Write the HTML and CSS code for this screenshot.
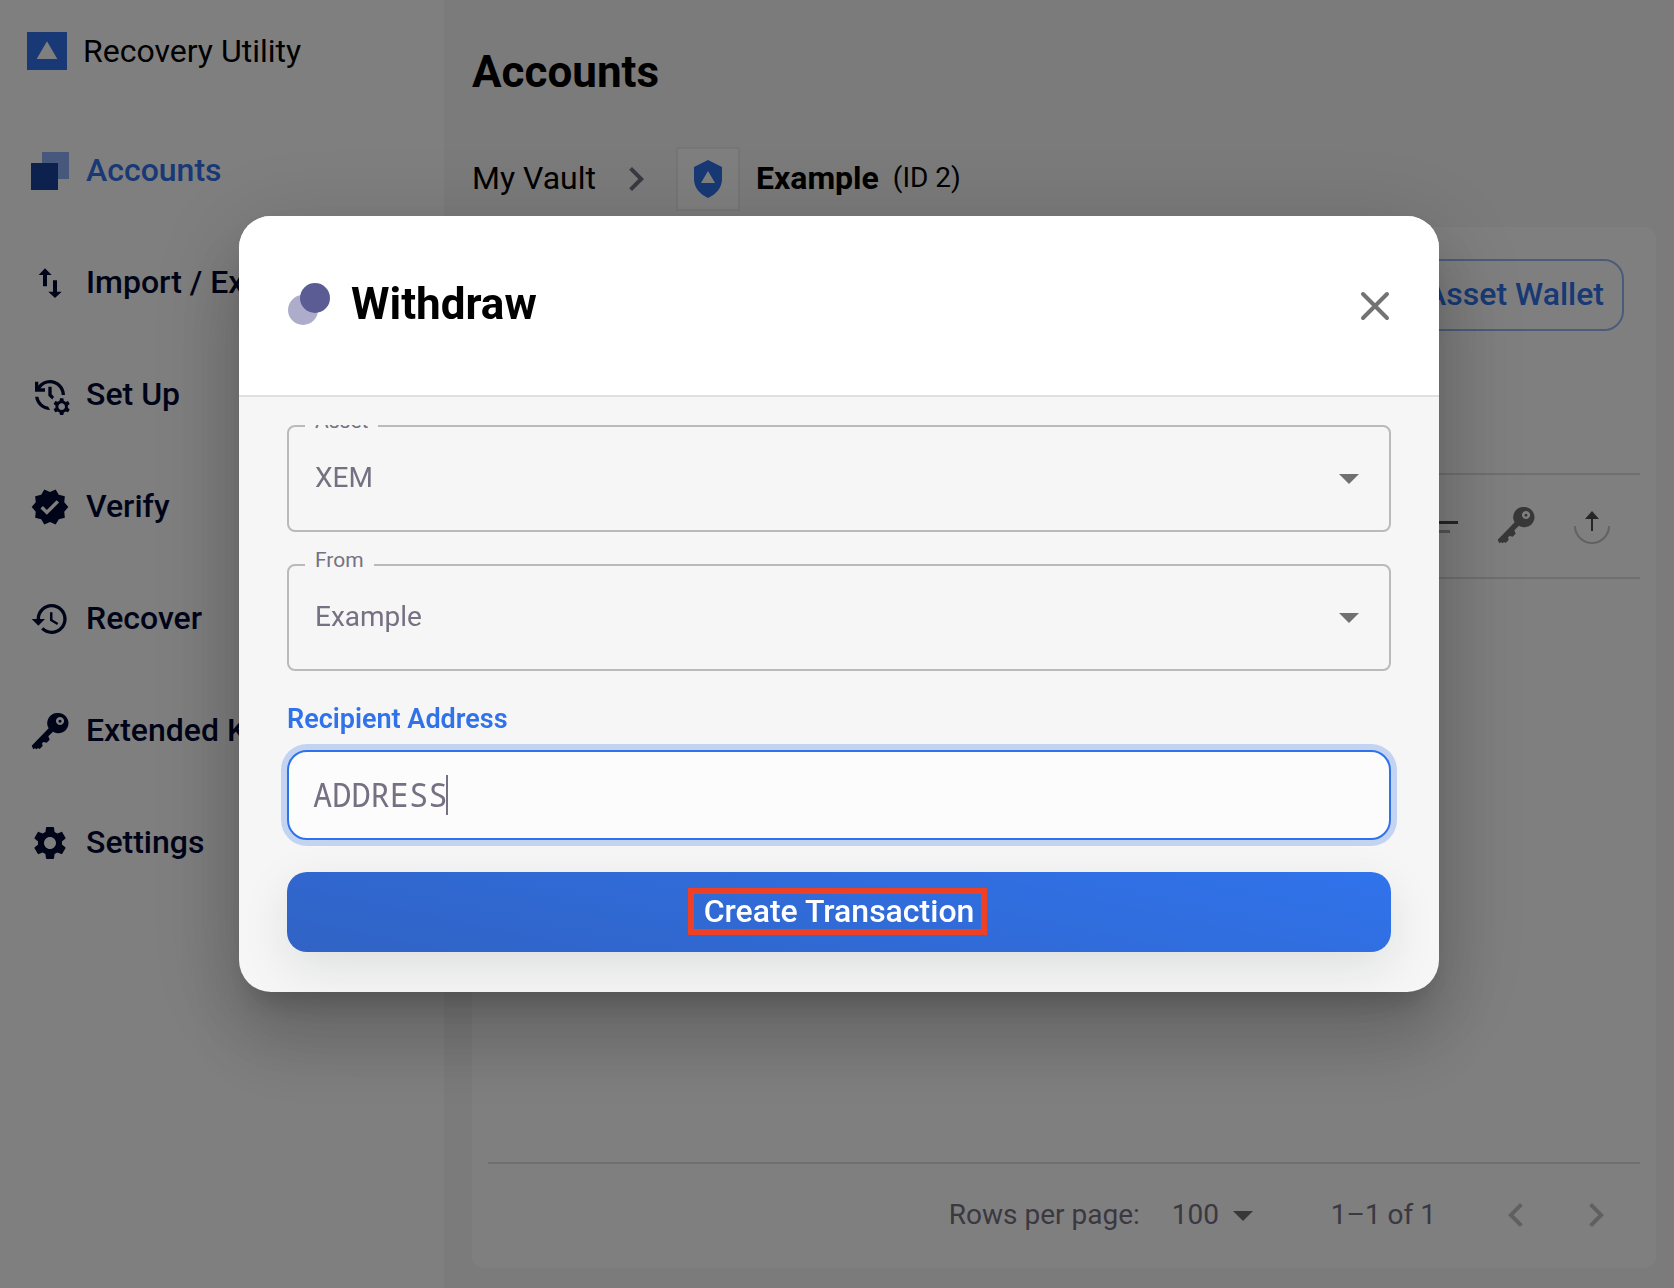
FILE: index.html
```html
<!DOCTYPE html>
<html lang="en">
<head>
<meta charset="utf-8">
<title>Recovery Utility</title>
<link rel="stylesheet" href="styles.css">
</head>
<body>
<svg class="defs" width="0" height="0" aria-hidden="true">
  <symbol id="key" viewBox="0 0 120 120">
    <path fill-rule="evenodd" d="M84.500 6a30.500 30.500 0 1 1-15.500 56.500L55 76l4 10-9 9-9-2-5 4 2 8-9 9-5-3-4 4-5-3-5 3L5 104 56 52A30.500 30.500 0 0 1 84.500 6ZM90 18a12 12 0 1 0 .1 0ZM90 26a4.500 4.500 0 1 1-.1 0Z"/>
  </symbol>
  <symbol id="drop" viewBox="0 0 24 24"><path d="M7 10l5 5 5-5z"/></symbol>
  <symbol id="next" viewBox="0 0 24 24"><path d="M10 6L8.590 7.410 13.170 12l-4.580 4.590L10 18l6-6z"/></symbol>
  <symbol id="prev" viewBox="0 0 24 24"><path d="M15.410 7.410L14 6l-6 6 6 6 1.410-1.410L10.830 12z"/></symbol>
</svg>

<div class="app">
  <aside class="sidebar">
    <div class="brand">
      <svg class="logo" viewBox="0 0 120 114"><path fill="#3072ea" d="M0 0h120v114H0z"/><path fill="#fff" d="M29 81h62L60 28z"/></svg>
      <span>Recovery Utility</span>
    </div>
    <nav class="nav">
      <a class="nav-item active" href="#accounts">
        <svg viewBox="0 0 120 120"><path fill="#90b0fb" d="M36 3h81v81H36z"/><path fill="#1a429c" d="M3 36h81v81H3z"/></svg>
        <span>Accounts</span>
      </a>
      <a class="nav-item" href="#import">
        <svg viewBox="0 0 120 120"><path d="M26 36 45 16l20 20H51v34H39V36zM69 52h12v34h14L75 105 55 86h14z"/></svg>
        <span>Import / Export</span>
      </a>
      <a class="nav-item" href="#setup">
        <svg viewBox="0 0 24 24"><path d="M22.690 18.370l1.140-1-1-1.730-1.450.49c-.32-.27-.68-.48-1.080-.63L20 14h-2l-.3 1.490c-.4.15-.76.36-1.080.63l-1.450-.49-1 1.730 1.140 1c-.08.5-.08.76 0 1.260l-1.140 1 1 1.730 1.450-.49c.32.27.68.48 1.080.63L18 24h2l.3-1.490c.4-.15.76-.36 1.080-.63l1.450.49 1-1.730-1.140-1c.08-.51.08-.77 0-1.270zM19 21c-1.100 0-2-.9-2-2s.9-2 2-2 2 .9 2 2-.9 2-2 2zM11 7v5.410l2.360 2.360 1.040-1.790-1.400-1.390V7h-2zm10 5c0-4.970-4.030-9-9-9-2.830 0-5.350 1.320-7 3.360V4H3v6h6V8H6.260C7.530 6.190 9.630 5 12 5c3.860 0 7 3.140 7 7h2zm-10.140 6.910c-2.990-.49-5.350-2.900-5.780-5.910H3.060c.5 4.500 4.310 8 8.940 8h.07l-1.210-2.090z"/></svg>
        <span>Set Up</span>
      </a>
      <a class="nav-item" href="#verify">
        <svg viewBox="0 0 24 24"><path d="M23 12l-2.440-2.790.34-3.690-3.610-.82-1.890-3.200L12 2.960 8.600 1.500 6.710 4.690 3.100 5.500l.34 3.700L1 12l2.440 2.790-.34 3.700 3.610.82L8.600 22.500l3.400-1.470 3.400 1.460 1.890-3.190 3.610-.82-.34-3.690L23 12zm-12.910 4.720l-3.800-3.810 1.480-1.480 2.320 2.330 5.850-5.870 1.480 1.480-7.330 7.350z"/></svg>
        <span>Verify</span>
      </a>
      <a class="nav-item" href="#recover">
        <svg viewBox="0 0 24 24"><path d="M13 3c-4.970 0-9 4.030-9 9H1l3.890 3.890.07.14L9 12H6c0-3.870 3.130-7 7-7s7 3.130 7 7-3.130 7-7 7c-1.930 0-3.680-.79-4.940-2.060l-1.420 1.420C8.270 19.990 10.510 21 13 21c4.970 0 9-4.030 9-9s-4.030-9-9-9zm-1 5v5l4.280 2.540.72-1.210-3.500-2.080V8H12z"/></svg>
        <span>Recover</span>
      </a>
      <a class="nav-item" href="#keys">
        <svg><use href="#key"/></svg>
        <span>Extended Keys</span>
      </a>
      <a class="nav-item" href="#settings">
        <svg viewBox="0 0 24 24"><path d="M19.140 12.940c.04-.3.06-.61.06-.94 0-.32-.02-.64-.07-.94l2.030-1.580c.18-.14.23-.41.12-.61l-1.920-3.320c-.12-.22-.37-.29-.59-.22l-2.390.96c-.5-.38-1.030-.7-1.620-.94l-.36-2.540c-.04-.24-.24-.41-.48-.41h-3.840c-.24 0-.43.17-.47.41l-.36 2.540c-.59.24-1.130.57-1.620.94l-2.390-.96c-.22-.08-.47 0-.59.22L2.740 8.870c-.12.21-.08.47.12.61l2.030 1.580c-.05.3-.09.63-.09.94s.02.64.07.94l-2.030 1.580c-.18.14-.23.41-.12.61l1.920 3.320c.12.22.37.29.59.22l2.390-.96c.5.38 1.030.7 1.620.94l.36 2.540c.05.24.24.41.48.41h3.840c.24 0 .44-.17.47-.41l.36-2.540c.59-.24 1.130-.56 1.620-.94l2.390.96c.22.08.47 0 .59-.22l1.920-3.320c.12-.22.07-.47-.12-.61l-2.010-1.580zM12 15.600c-1.980 0-3.600-1.620-3.600-3.600s1.620-3.600 3.600-3.600 3.600 1.620 3.600 3.600-1.620 3.600-3.600 3.600z"/></svg>
        <span>Settings</span>
      </a>
    </nav>
  </aside>

  <main class="main">
    <h1 class="title">Accounts</h1>
    <div class="crumbs">
      <a href="#vault">My Vault</a>
      <svg class="icon-lg crumb-sep"><use href="#next"/></svg>
      <span class="vault-badge">
        <svg viewBox="0 0 28 38"><path fill="#3072ea" d="M14 0l14 7v12c0 8-5 15-14 19C5 34 0 27 0 19V7z"/><path fill="#fff" d="M7 23h14L14 11z"/></svg>
      </span>
      <div class="vault-name">
        <strong>Example</strong>
        <span class="vault-id">(ID 2)</span>
      </div>
    </div>

    <section class="card">
      <div class="toolbar"><button class="add-wallet" type="button">Add Asset Wallet</button></div>
      <table class="wallets">
        <tbody>
          <tr>
            <td>XEM</td>
            <td>
              <div class="actions">
                <button type="button" aria-label="Details"><svg viewBox="0 0 40 40"><path fill="#4a4a54" d="M2 16h36v3H2z"/><path fill="#a8a8ae" d="M10 25h20v3H10z"/></svg></button>
                <button type="button" aria-label="Keys"><svg><use href="#key"/></svg></button>
                <button type="button" aria-label="Withdraw"><svg viewBox="0 0 40 40"><path fill="none" stroke="#c4c4c4" stroke-width="2" d="M3 21a17 17 0 0 0 34 0"/><path fill="#4c4c52" d="M13 14l7-8 7 8h-6v12h-2V14z"/></svg></button>
              </div>
            </td>
          </tr>
        </tbody>
      </table>
      <footer class="pager">
        <label for="rows">Rows per page:</label>
        <span class="rows">
          <select id="rows"><option>100</option></select>
          <svg class="icon-lg drop"><use href="#drop"/></svg>
        </span>
        <span class="range">1–1 of 1</span>
        <button type="button" aria-label="Previous page" disabled><svg class="icon-lg"><use href="#prev"/></svg></button>
        <button type="button" aria-label="Next page" disabled><svg class="icon-lg"><use href="#next"/></svg></button>
      </footer>
    </section>
  </main>
</div>

<div class="backdrop">
  <div class="dialog" role="dialog" aria-modal="true" aria-labelledby="dialog-title">
    <header class="dialog-head">
      <svg class="coin" viewBox="0 0 44 44"><circle cx="16" cy="28" r="15" fill="#adadcb"/><circle cx="28" cy="16" r="15" fill="#5b5c94"/></svg>
      <h2 id="dialog-title">Withdraw</h2>
      <button class="close" type="button" aria-label="Close"><svg class="icon-lg" viewBox="0 0 48 48"><path fill="none" stroke="#737373" stroke-width="4" stroke-linecap="round" d="M12 14l24 24M36 14L12 38"/></svg></button>
    </header>
    <div class="dialog-body">
      <form class="form">
        <div class="field">
          <label for="asset">Asset</label>
          <select id="asset"><option>XEM</option></select>
          <svg class="icon-lg drop"><use href="#drop"/></svg>
        </div>
        <div class="field">
          <label for="from">From</label>
          <select id="from"><option>Example</option></select>
          <svg class="icon-lg drop"><use href="#drop"/></svg>
        </div>
        <div class="address">
          <label for="address">Recipient Address</label>
          <div class="address-box">
            <input id="address" type="text" value="ADDRESS">
            <span class="caret"></span>
          </div>
        </div>
        <button class="submit" type="button">Create Transaction<span class="highlight"></span></button>
      </form>
    </div>
  </div>
</div>
</body>
</html>
```

FILE: styles.css
```css
* { box-sizing: border-box; }

body {
  margin: 0;
  font-family: Roboto, "Liberation Sans", sans-serif;
  font-size: 32px;
  line-height: 40px;
  color: #000;
}

button, select, input { font: inherit; color: inherit; margin: 0; }
button { padding: 0; border: 0; background: none; }
a { color: inherit; text-decoration: none; }
svg { display: block; flex: none; fill: currentColor; }

.defs { position: absolute; }
.icon-lg { width: 48px; height: 48px; }

.app {
  display: grid;
  grid-template-columns: 444px 1fr;
  min-height: 100vh;
}

/* Sidebar */
.sidebar { background: #fff; }
.brand {
  display: flex;
  align-items: center;
  gap: 16px;
  padding: 31px 27px;
}
.logo { width: 40px; height: 38px; }
.nav { margin-top: 13px; }
.nav-item {
  display: flex;
  align-items: center;
  gap: 16px;
  height: 112px;
  padding-left: 30px;
  font-weight: 500;
  color: #010832;
}
.nav-item svg { width: 40px; height: 40px; }
.nav-item span { padding-bottom: 2px; }
.nav-item.active { color: #3072ea; }

/* Main column */
.main {
  display: flex;
  flex-direction: column;
  padding: 46px 18px 20px 28px;
  background: #f6f6f6;
}
.title {
  margin: 0;
  font-size: 44px;
  line-height: 52px;
  font-weight: 700;
}
.crumbs {
  display: flex;
  align-items: center;
  gap: 16px;
  margin: 49px 0 16px;
}
.crumbs a { padding-bottom: 2px; }
.crumb-sep { color: #757082; }
.vault-badge {
  display: grid;
  place-items: center;
  width: 64px;
  height: 64px;
  border: 2px solid #ededed;
  background: #fff;
}
.vault-badge svg { width: 28px; height: 38px; }
.vault-name {
  display: flex;
  align-items: center;
  gap: 14px;
  padding-bottom: 2px;
}
.vault-id { font-size: 28px; }

.card {
  flex: 1;
  display: flex;
  flex-direction: column;
  padding: 32px 16px 0;
  border-radius: 12px;
  background: #fff;
}
.toolbar {
  display: flex;
  justify-content: flex-end;
  padding: 0 16px;
}
.add-wallet {
  height: 72px;
  padding: 0 18px 2px;
  border: 2px solid #97b8f4;
  border-radius: 20px;
  font-weight: 500;
  color: #3072ea;
}
.wallets {
  width: 100%;
  margin-top: 142px;
  border-collapse: collapse;
}
.wallets tr {
  height: 104px;
  border-top: 2px solid #dedede;
  border-bottom: 2px solid #dedede;
}
.wallets td { padding: 0; }
.actions {
  display: flex;
  justify-content: flex-end;
  gap: 36px;
  padding: 0 28px 2px 0;
  color: #707070;
}
.actions svg { width: 40px; height: 40px; }

.pager {
  display: flex;
  align-items: center;
  justify-content: flex-end;
  height: 106px;
  margin-top: auto;
  padding: 0 20px 2px 0;
  border-top: 2px solid #dedede;
  font-size: 28px;
  color: #757082;
}
.pager button { color: #c0c0c0; }
.pager button + button { margin-left: 32px; }
.rows { position: relative; margin: 0 64px 0 32px; }
.rows select {
  display: block;
  width: 95px;
  border: 0;
  appearance: none;
  background: none;
}
.rows .drop { position: absolute; right: 0; top: -4px; color: #707070; }
.range { margin-right: 56px; }

/* Dialog */
.backdrop {
  position: fixed;
  inset: 0;
  display: flex;
  justify-content: center;
  align-items: flex-start;
  padding: 216px 0 0 4px;
  background: rgba(0, 0, 0, .5);
}
.dialog {
  width: 100%;
  max-width: 1200px;
  overflow: hidden;
  border-radius: 32px;
  background: #f6f6f6;
  box-shadow:
    0 22px 30px -14px rgba(0, 0, 0, .2),
    0 48px 76px 6px rgba(0, 0, 0, .14),
    0 18px 92px 16px rgba(0, 0, 0, .12);
}
.dialog-head {
  display: flex;
  align-items: center;
  gap: 20px;
  padding: 62px 48px 65px;
  border-bottom: 2px solid #e0e0e0;
  background: #fff;
}
.coin { width: 44px; height: 44px; }
.dialog-head h2 {
  margin: 0;
  font-size: 44px;
  line-height: 52px;
  font-weight: 700;
}
.close { margin: 0 -8px 0 auto; }

.dialog-body { padding: 28px 48px 40px; }
.form {
  display: flex;
  flex-direction: column;
  gap: 32px;
  clip-path: inset(0 -48px -40px);
}
.field {
  position: relative;
  font-size: 28px;
  color: #757082;
}
.field select {
  display: block;
  width: 100%;
  height: 107px;
  padding: 0 26px 2px;
  border: 2px solid #bababa;
  border-radius: 8px;
  appearance: none;
  background: none;
}
.field label {
  position: absolute;
  left: 18px;
  top: -16px;
  padding: 0 10px;
  font-size: 21px;
  line-height: 24px;
  background: #f6f6f6;
}
.field .drop { position: absolute; right: 18px; top: 29px; color: #707070; }

.address label {
  display: block;
  margin-bottom: 15px;
  font-size: 27px;
  line-height: 32px;
  font-weight: 600;
  color: #3072ea;
}
.address-box { position: relative; }
.address input {
  display: block;
  width: 100%;
  height: 90px;
  padding: 0 24px 2px;
  border: 2px solid #3072ea;
  border-radius: 20px;
  outline: 0;
  background: #fcfcfc;
  box-shadow: 0 0 0 6px #c3d4f3;
  font-family: "Noto Sans Mono", "DejaVu Sans Mono", monospace;
  color: #757082;
}
.caret {
  position: absolute;
  left: 159px;
  top: 25px;
  width: 2px;
  height: 40px;
  background: #757082;
}

.submit {
  position: relative;
  height: 80px;
  padding-bottom: 2px;
  border-radius: 20px;
  background: linear-gradient(12deg, #3063c4, #3073ec);
  box-shadow: 0 16px 48px rgba(10, 30, 30, .1);
  font-weight: 500;
  color: #fff;
}
.highlight {
  position: absolute;
  inset: 16px 4px 0 0;
  width: 299px;
  height: 47px;
  margin: 0 auto;
  border: 6px solid #ee4024;
}
```
